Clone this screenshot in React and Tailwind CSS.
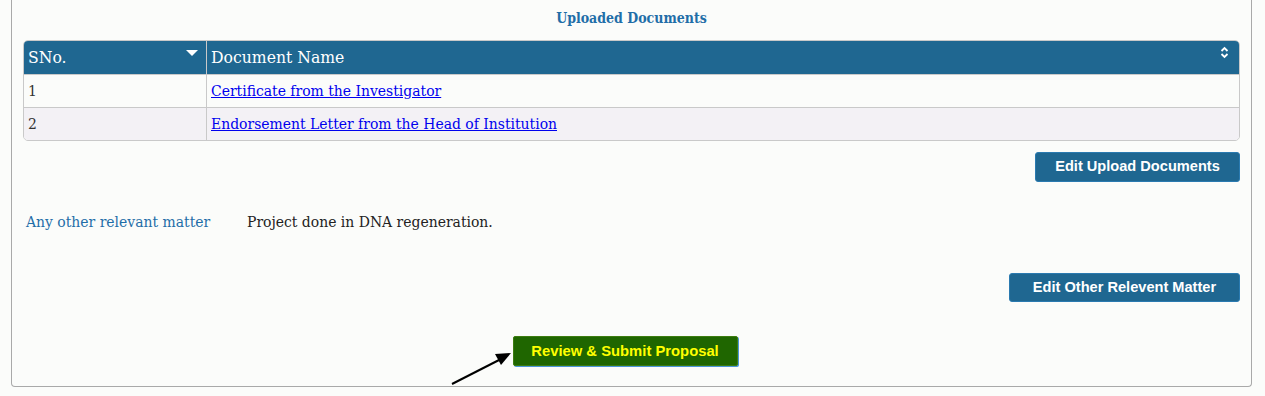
import React from 'react';

const docs = [
  { sno: 1, name: 'Certificate from the Investigator' },
  { sno: 2, name: 'Endorsement Letter from the Head of Institution' },
];

const slab = { fontFamily: '"Roboto Slab", "DejaVu Serif Condensed", "DejaVu Serif", serif' };
const sans = { fontFamily: '"Liberation Sans", Arial, sans-serif' };

function SortDown() {
  return (
    <svg width="12" height="7" viewBox="0 0 12 7" className="shrink-0">
      <path d="M0 0h12L6 6z" fill="#fff" />
    </svg>
  );
}

function SortBoth() {
  return (
    <svg width="9" height="13" viewBox="0 0 9 13" className="shrink-0">
      <path d="M1.5 5L4.5 2l3 3" stroke="#fff" strokeWidth="1.8" fill="none" />
      <path d="M1.5 8l3 3 3-3" stroke="#fff" strokeWidth="1.8" fill="none" />
    </svg>
  );
}

export default function App() {
  return (
    <div className="min-h-screen bg-[#fbfcfa] pr-[13px] pl-[11px]" style={slab}>
      <div className="border-x border-b border-[#a9a9a9] rounded-b-[4px] px-[11px] pt-[9px] pb-[20px]">
        <h3 className="text-center text-[14px] leading-[18px] font-bold text-[#1f6ea8]">Uploaded Documents</h3>

        <div className="mt-[13px] border border-[#c9c9c9] rounded-[5px] overflow-hidden">
          <div className="flex h-[34px] bg-[#1f6791] text-white text-[17.4px] border-b border-[#c9c9c9]">
            <div className="w-[183px] flex items-center justify-between pl-[4px] pr-[8px] border-r border-[#c9c9c9]">
              <span>SNo.</span>
              <span className="-mt-[8px]"><SortDown /></span>
            </div>
            <div className="flex-1 flex items-center justify-between pl-[4px] pr-[10px]">
              <span>Document Name</span>
              <span className="-mt-[10px]"><SortBoth /></span>
            </div>
          </div>
          {docs.map((d, i) => (
            <div
              key={d.sno}
              className={`flex h-[32px] text-[15.5px] ${i === 0 ? 'h-[33px] bg-[#fbfcfa] border-b border-[#c9c9c9]' : 'bg-[#f3f1f5]'}`}
            >
              <div className="w-[183px] flex items-center pl-[4px] pt-[2px] border-r border-[#c9c9c9] text-[#333]">{d.sno}</div>
              <div className="flex-1 flex items-center pl-[4px] pt-[2px]">
                <a href="#" className="text-[#0000ee] underline">{d.name}</a>
              </div>
            </div>
          ))}
        </div>

        <div className="flex justify-end mt-[11px]">
          <button className="h-[30px] w-[205px] rounded-[3px] border border-[#2a7ab0] bg-[#1f6791] text-white text-[14.6px] font-bold" style={sans}>
            Edit Upload Documents
          </button>
        </div>

        <div className="flex items-center mt-[32px] h-[18px] text-[15.5px]">
          <span className="pl-[3px] w-[224px] text-[#1f6ea8]">Any other relevant matter</span>
          <span className="text-[#222]">Project done in DNA regeneration.</span>
        </div>

        <div className="flex justify-end mt-[41px]">
          <button className="h-[29px] w-[231px] rounded-[3px] border border-[#2a7ab0] bg-[#1f6791] text-white text-[14.6px] font-bold" style={sans}>
            Edit Other Relevent Matter
          </button>
        </div>

        <div className="flex justify-center mt-[34px] pr-[13px]">
          <div className="relative">
            <svg className="absolute left-[-62px] top-[12px]" width="64" height="40" viewBox="0 0 64 40">
              <path d="M1 36L50 11" stroke="#000" strokeWidth="2" />
              <path d="M60 5L44 6L50 17z" fill="#000" />
            </svg>
            <button
              className="h-[30px] w-[225px] rounded-[2px] border border-[#3d7d10] bg-[#1f6600] text-[#ffff00] text-[14.8px] font-bold shadow-[1px_1px_0_#4a96d8]"
              style={sans}
            >
              Review &amp; Submit Proposal
            </button>
          </div>
        </div>
      </div>
    </div>
  );
}
